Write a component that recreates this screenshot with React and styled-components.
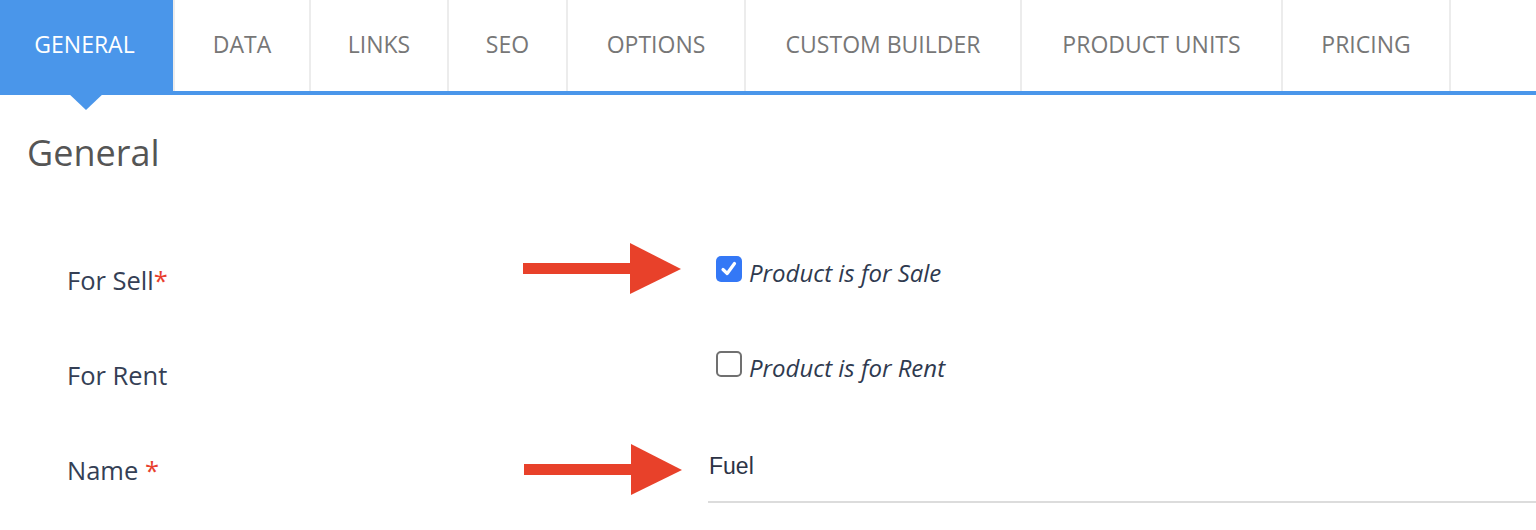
import * as React from "react";
import styled, { createGlobalStyle } from "styled-components";

const GlobalStyle = createGlobalStyle`
  body {
    margin: 0;
    background: #ffffff;
    font-family: 'Open Sans', 'Liberation Sans', sans-serif;
    overflow: hidden;
  }
`;

const blue = "#4a96ea";

const Page = styled.div`
  width: 100%;
`;

const TabBar = styled.div`
  display: flex;
  border-bottom: 4px solid ${blue};
`;

const Tab = styled.div`
  position: relative;
  width: ${(p) => p.w}px;
  height: 91px;
  display: flex;
  align-items: center;
  justify-content: center;
  box-sizing: border-box;
  padding: 0 ${(p) => (p.active ? 4 : 0)}px 3px 0;
  font-size: 23px;
  white-space: nowrap;
  color: ${(p) => (p.active ? "#ffffff" : "#777777")};
  background: ${(p) => (p.active ? blue : "#ffffff")};
  border-right: 2px solid #ececec;

  &::after {
    content: "";
    display: ${(p) => (p.active ? "block" : "none")};
    position: absolute;
    top: 100%;
    left: 50%;
    margin-left: -21px;
    border-left: 20px solid transparent;
    border-right: 20px solid transparent;
    border-top: 19px solid ${blue};
  }
`;

const Heading = styled.h2`
  margin: 36px 0 0 27px;
  font-size: 36px;
  line-height: 44px;
  font-weight: 400;
  color: #555555;
`;

const Form = styled.div`
  margin-top: 65px;
  padding-left: 67px;
`;

const Row = styled.div`
  position: relative;
  display: flex;
  align-items: flex-start;
  height: 95px;
`;

const Label = styled.div`
  width: 641px;
  flex-shrink: 0;
  padding-top: 24px;
  font-size: 25.5px;
  line-height: 32px;
  color: #353f55;
`;

const Star = styled.span`
  color: #e8402e;
`;

const CheckField = styled.label`
  display: flex;
  align-items: flex-start;
  padding-top: 16px;
  padding-left: 8px;
`;

const Box = styled.span`
  width: 26px;
  height: 26px;
  box-sizing: border-box;
  border-radius: 5px;
  flex-shrink: 0;
  display: flex;
  align-items: center;
  justify-content: center;
  background: ${(p) => (p.checked ? "#3478f6" : "#ffffff")};
  border: ${(p) => (p.checked ? "none" : "2px solid #707070")};
`;

const CheckText = styled.span`
  margin: 2px 0 0 7px;
  font-size: 24px;
  line-height: 30px;
  font-style: italic;
  color: #2f3a4f;
`;

const TextInput = styled.input`
  flex: 1;
  min-width: 0;
  height: 70px;
  margin-top: 1px;
  padding: 0 0 0 1px;
  border: none;
  border-bottom: 2px solid #dcdcdc;
  outline: none;
  font-family: 'Liberation Sans', Arial, sans-serif;
  font-size: 23px;
  color: #2c3345;
  background: transparent;
`;

const Arrow = styled.svg`
  position: absolute;
  left: ${(p) => p.x}px;
  top: ${(p) => p.y}px;
`;

const RedArrow = ({ x, y }) => (
  <Arrow x={x} y={y} width="158" height="51" viewBox="0 0 158 51">
    <rect x="0" y="20" width="110" height="11" fill="#e8412a" />
    <polygon points="107,0 158,26 107,51" fill="#e8412a" />
  </Arrow>
);

const tabs = [
  ["GENERAL", 175],
  ["DATA", 136],
  ["LINKS", 138],
  ["SEO", 119],
  ["OPTIONS", 178],
  ["CUSTOM BUILDER", 276],
  ["PRODUCT UNITS", 261],
  ["PRICING", 168],
];

export default function App() {
  return (
    <Page>
      <GlobalStyle />
      <TabBar>
        {tabs.map(([t, w], i) => (
          <Tab key={t} w={w} active={i === 0}>
            {t}
          </Tab>
        ))}
      </TabBar>

      <Heading>General</Heading>

      <Form>
        <Row>
          <Label>
            For Sell<Star>*</Star>
          </Label>
          <CheckField>
            <Box checked>
              <svg width="20" height="20" viewBox="0 0 20 20">
                <path d="M4 10.5 L8.2 14.5 L15.5 4.5" fill="none" stroke="#fff" strokeWidth="3.2" strokeLinecap="round" strokeLinejoin="round" />
              </svg>
            </Box>
            <CheckText>Product is for Sale</CheckText>
          </CheckField>
          <RedArrow x={456} y={3} />
        </Row>

        <Row>
          <Label>For Rent</Label>
          <CheckField>
            <Box />
            <CheckText>Product is for Rent</CheckText>
          </CheckField>
        </Row>

        <Row>
          <Label>
            Name <Star>*</Star>
          </Label>
          <TextInput defaultValue="Fuel" />
          <RedArrow x={457} y={14} />
        </Row>
      </Form>
    </Page>
  );
}
